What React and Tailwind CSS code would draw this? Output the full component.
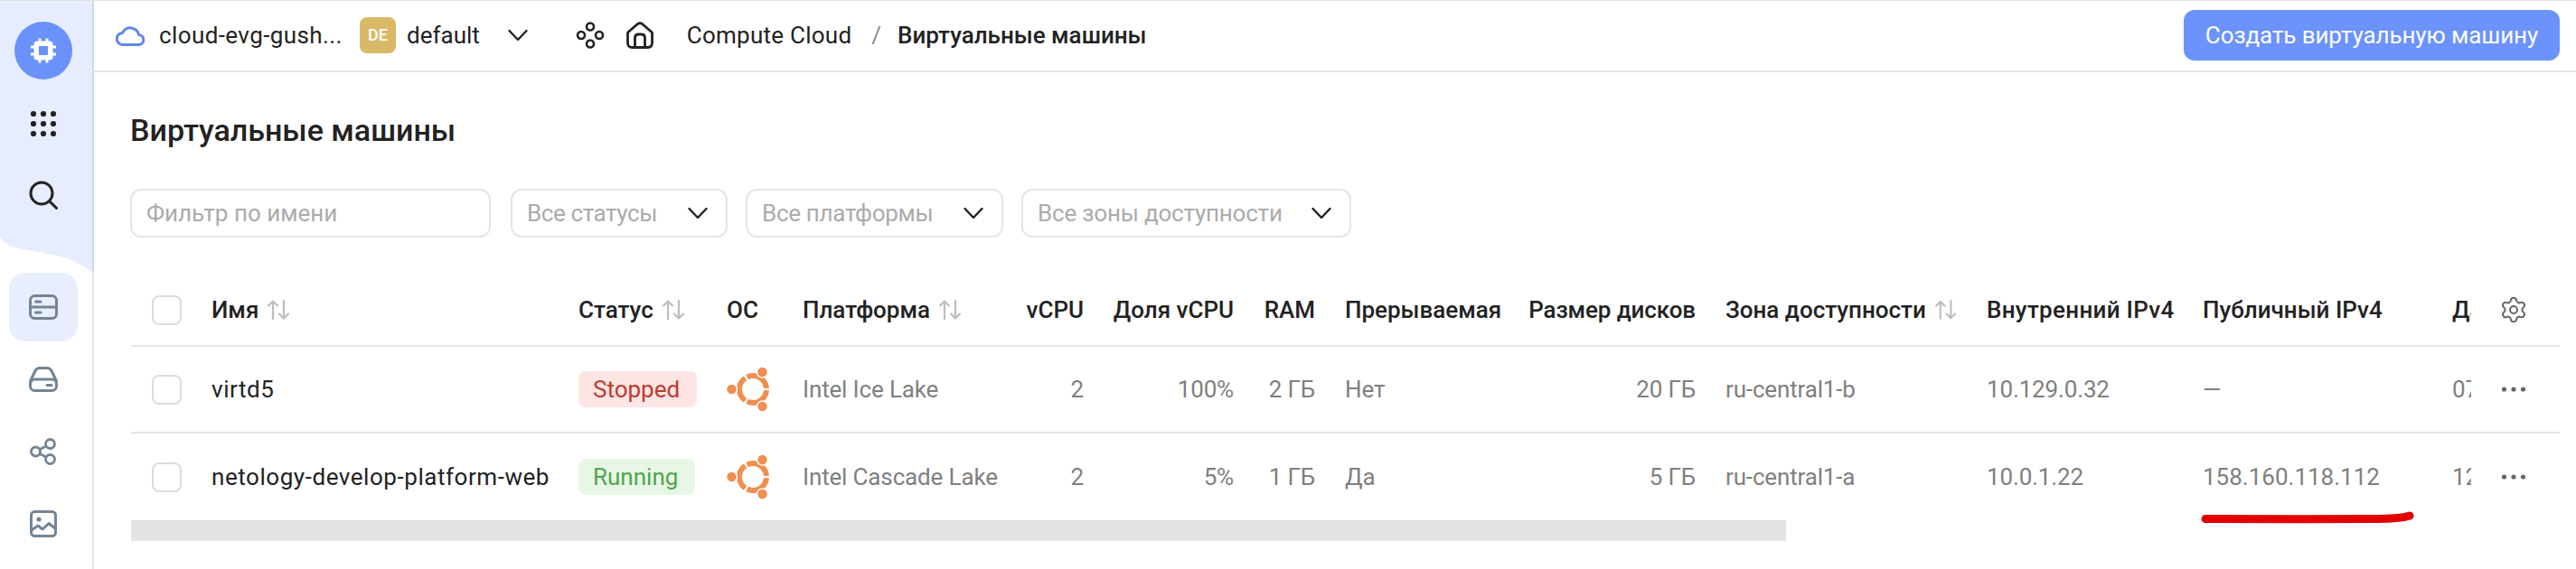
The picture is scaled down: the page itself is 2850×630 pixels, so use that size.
import React from "react";
import { Settings } from "lucide-react";

const rowGrid =
  "grid grid-cols-[33px_373px_131px_51px_213px_65px_133px_57px_172px_183px_256px_206px_243px_21px_28px] gap-x-[33px] items-center pl-[23px]";

function Chevron({ className }) {
  return (
    <svg className={className} width="22" height="14" viewBox="0 0 22 14" fill="none" stroke="#222" strokeWidth="2.4" strokeLinecap="round" strokeLinejoin="round">
      <path d="M1.5 2 L11 12 L20.5 2" />
    </svg>
  );
}

function Sort({ className }) {
  return (
    <svg className={className} width="26" height="22" viewBox="0 0 26 22" fill="none" stroke="#bdbdbd" strokeWidth="2.2" strokeLinecap="round" strokeLinejoin="round">
      <path d="M7 21 V1.5 M2 6.5 L7 1.5 L12 6.5" />
      <path d="M19 1 V20.5 M14 15.5 L19 20.5 L24 15.5" />
    </svg>
  );
}

function Ubuntu() {
  return (
    <svg width="50" height="50" viewBox="0 0 50 50" fill="none">
      <circle cx="29" cy="25" r="15" stroke="#ef8f50" strokeWidth="6" pathLength="120" strokeDasharray="37 3" strokeDashoffset="-1.5" />
      <circle cx="5.5" cy="25" r="6" fill="#ef8f50" stroke="#fff" strokeWidth="1.5" />
      <circle cx="39.5" cy="6" r="6" fill="#ef8f50" stroke="#fff" strokeWidth="1.5" />
      <circle cx="39.5" cy="44" r="6" fill="#ef8f50" stroke="#fff" strokeWidth="1.5" />
    </svg>
  );
}

function Check() {
  return <div className="w-[33px] h-[33px] rounded-[8px] border-2 border-[#dcdcdc] bg-white" />;
}

function Dots() {
  return (
    <svg width="28" height="6" viewBox="0 0 28 6" fill="#666">
      <circle cx="3.5" cy="3" r="2.6" />
      <circle cx="14" cy="3" r="2.6" />
      <circle cx="24.5" cy="3" r="2.6" />
    </svg>
  );
}

function Head({ children, sort, right, track }) {
  return (
    <div className={`flex items-center gap-[9px] font-medium text-[#222] whitespace-nowrap ${right ? "justify-end" : ""} ${track || ""}`}>
      <span>{children}</span>
      {sort && <Sort />}
    </div>
  );
}

function Row({ name, badge, badgeClass, platform, cpu, share, ram, pre, disk, zone, ip, pub, d, border }) {
  const muted = "text-[#7f7f7f] whitespace-nowrap tracking-[-0.15px]";
  return (
    <div className={`${rowGrid} h-[96px] ${border ? "border-b-2 border-[#e5e5e5]" : ""}`}>
      <Check />
      <div className="text-[#222] whitespace-nowrap tracking-[0.55px]">{name}</div>
      <div>
        <span className={`inline-flex items-center h-[40px] rounded-[8px] pl-[16px] pr-[19px] ${badgeClass}`}>{badge}</span>
      </div>
      <div className="flex"><Ubuntu /></div>
      <div className={muted}>{platform}</div>
      <div className={`${muted} text-right`}>{cpu}</div>
      <div className={`${muted} text-right`}>{share}</div>
      <div className={`${muted} text-right`}>{ram}</div>
      <div className={muted}>{pre}</div>
      <div className={`${muted} text-right`}>{disk}</div>
      <div className={muted}>{zone}</div>
      <div className={muted}>{ip}</div>
      <div className="text-[#7f7f7f] whitespace-nowrap">{pub}</div>
      <div className={`${muted} overflow-hidden`}>{d}</div>
      <div className="flex justify-center"><div className="shrink-0 flex"><Dots /></div></div>
    </div>
  );
}

export default function App() {
  return (
    <div className="flex w-[2850px] h-[630px] bg-white border-t border-[#e2e2e2] font-['Roboto',sans-serif] text-[26px] leading-[32px] text-[#222] overflow-hidden">
      {/* Sidebar */}
      <aside className="relative w-[104px] shrink-0 border-r-2 border-[#e5e5e5] pr-[6px] flex flex-col items-center">
        <svg className="absolute left-0 top-0" width="104" height="300" viewBox="0 0 104 300">
          <path d="M0 0 H102 V300 C92 293 82 287 67 283 C50 279 30 276 17 273 C9 271 4 267 0 262 Z" fill="#e7edfe" />
          <path d="M103 0 V300" stroke="#cfd8ea" strokeWidth="2" />
        </svg>
        <div className="relative w-[64px] h-[64px] mt-[23px] rounded-full bg-[#6b92fb] flex items-center justify-center">
          <svg width="28" height="28" viewBox="0 0 28 28">
            <rect x="3.5" y="3.5" width="21" height="21" rx="3.5" fill="#fff" />
            <rect x="9" y="9" width="10" height="10" fill="#6b92fb" />
            <path d="M8.5 0.5h3v4h-3zM16.5 0.5h3v4h-3zM8.5 23.5h3v4h-3zM16.5 23.5h3v4h-3zM0 8.5h4v3h-4zM0 16.5h4v3h-4zM24 8.5h4v3h-4zM24 16.5h4v3h-4z" fill="#fff" />
          </svg>
        </div>
        <svg className="relative mt-[34px]" width="30" height="30" viewBox="0 0 30 30" fill="#222">
          <circle cx="4" cy="4" r="3.1" /><circle cx="15" cy="4" r="3.1" /><circle cx="26" cy="4" r="3.1" />
          <circle cx="4" cy="15" r="3.1" /><circle cx="15" cy="15" r="3.1" /><circle cx="26" cy="15" r="3.1" />
          <circle cx="4" cy="26" r="3.1" /><circle cx="15" cy="26" r="3.1" /><circle cx="26" cy="26" r="3.1" />
        </svg>
        <svg className="relative mt-[48px]" width="32" height="32" viewBox="0 0 32 32" fill="none" stroke="#222" strokeWidth="3" strokeLinecap="round">
          <circle cx="14" cy="14" r="12" />
          <path d="M23 23 L30.5 30.5" />
        </svg>
        <div className="relative mt-[70px] w-[76px] h-[76px] rounded-[18px] bg-[#e8eefe] flex items-center justify-center">
          <svg width="32" height="28" viewBox="0 0 32 28" fill="none" stroke="#748494" strokeWidth="3" strokeLinecap="round">
            <rect x="1.5" y="1.5" width="29" height="25" rx="5" />
            <path d="M1.5 14 H30.5 M7.5 8 H13 M7.5 20 H13" />
          </svg>
        </div>
        <svg className="relative mt-[28px]" width="32" height="28" viewBox="0 0 32 28" fill="none" stroke="#748494" strokeWidth="3" strokeLinecap="round" strokeLinejoin="round">
          <path d="M1.5 16 L7 4.5 Q8.5 1.5 12 1.5 H20 Q23.5 1.5 25 4.5 L30.5 16" />
          <rect x="1.5" y="14" width="29" height="12.5" rx="5" />
          <path d="M20 20.5 H25" />
        </svg>
        <svg className="relative mt-[51px]" width="32" height="30" viewBox="0 0 32 30" fill="none" stroke="#748494" strokeWidth="2.8">
          <circle cx="7.5" cy="15" r="5" />
          <circle cx="23.5" cy="6.5" r="5" />
          <circle cx="23.5" cy="23.5" r="5" />
          <path d="M12 12.5 L19 9 M12 17.5 L19 21" />
        </svg>
        <svg className="relative mt-[50px]" width="30" height="30" viewBox="0 0 30 30" fill="none" stroke="#748494" strokeWidth="3" strokeLinecap="round" strokeLinejoin="round">
          <rect x="1.5" y="1.5" width="27" height="27" rx="4" />
          <circle cx="10" cy="10" r="2.6" fill="#748494" stroke="none" />
          <path d="M2 22 L9 17 L14 21 L21 14.5 L28 20" />
        </svg>
      </aside>

      {/* Main */}
      <div className="flex-1 min-w-0 flex flex-col">
        <header className="h-[79px] shrink-0 border-b-2 border-[#e5e5e5] flex items-center pl-[24px] pr-[18px] pb-[2px]">
          <svg width="32" height="24" viewBox="0 0 32 24" fill="none" stroke="#5f86ef" strokeWidth="3" strokeLinejoin="round">
            <path d="M8 22.5 H25 A5.5 5.5 0 0 0 25.5 11.5 A9.5 9.5 0 0 0 7.5 9.5 A6.5 6.5 0 0 0 8 22.5 Z" />
          </svg>
          <span className="ml-[16px] w-[200px] whitespace-nowrap tracking-[0.4px]">cloud-evg-gush...</span>
          <span className="ml-[22px] w-[40px] h-[40px] rounded-[8px] bg-[#d9b967] text-white text-[18px] font-medium flex items-center justify-center">DE</span>
          <span className="ml-[12px] whitespace-nowrap">default</span>
          <Chevron className="ml-[31px]" />
          <svg className="ml-[53px]" width="32" height="30" viewBox="0 0 32 30" fill="none" stroke="#222" strokeWidth="2.6">
            <circle cx="16" cy="5.5" r="4" />
            <circle cx="6" cy="15" r="4" />
            <circle cx="26" cy="15" r="4" />
            <circle cx="16" cy="24.5" r="4" />
          </svg>
          <svg className="ml-[24px]" width="30" height="30" viewBox="0 0 30 30" fill="none" stroke="#222" strokeWidth="2.8" strokeLinejoin="round">
            <path d="M1.5 12 L12.5 2.5 Q15 0.8 17.5 2.5 L28.5 12 V23.5 Q28.5 28.5 23.5 28.5 H6.5 Q1.5 28.5 1.5 23.5 Z" />
            <path d="M9.5 28.5 V18 Q9.5 14 13.5 14 H16.5 Q20.5 14 20.5 18 V28.5" />
          </svg>
          <span className="ml-[37px] whitespace-nowrap tracking-[0.25px]">Compute Cloud</span>
          <span className="ml-[22px] text-[#8c8c8c]">/</span>
          <span className="ml-[18px] whitespace-nowrap font-medium">Виртуальные машины</span>
          <button className="ml-auto h-[56px] w-[416px] rounded-[12px] bg-[#6c92fb] text-white flex items-center justify-center whitespace-nowrap tracking-[-0.1px]">Создать виртуальную машину</button>
        </header>

        <main className="relative pl-[40px] pr-[18px] flex flex-col">
          <h1 className="mt-[44px] h-[40px] text-[34px] leading-[40px] font-medium whitespace-nowrap">Виртуальные машины</h1>
          <div className="mt-[45px] flex items-center gap-[20px] text-[#ababab]">
            <div className="w-[399px] h-[54px] rounded-[12px] border-2 border-[#e5e5e5] pl-[16px] flex items-center">Фильтр по имени</div>
            <div className="ml-[2px] w-[240px] h-[54px] rounded-[12px] border-2 border-[#e5e5e5] pl-[16px] pr-[20px] flex items-center justify-between tracking-[-0.4px]">Все статусы<Chevron /></div>
            <div className="w-[285px] h-[54px] rounded-[12px] border-2 border-[#e5e5e5] pl-[16px] pr-[20px] flex items-center justify-between tracking-[-0.3px]">Все платформы<Chevron /></div>
            <div className="w-[365px] h-[54px] rounded-[12px] border-2 border-[#e5e5e5] pl-[16px] pr-[20px] flex items-center justify-between tracking-[-0.2px]">Все зоны доступности<Chevron /></div>
          </div>

          <div className="mt-[41px] ml-[1px]">
            <div className={`${rowGrid} h-[80px] border-b-2 border-[#e5e5e5]`}>
              <Check />
              <Head sort>Имя</Head>
              <Head sort>Статус</Head>
              <Head>ОС</Head>
              <Head sort>Платформа</Head>
              <Head right>vCPU</Head>
              <Head right>Доля vCPU</Head>
              <Head right>RAM</Head>
              <Head>Прерываемая</Head>
              <Head right track="-tracking-[0.1px]">Размер дисков</Head>
              <Head sort>Зона доступности</Head>
              <Head track="tracking-[0.3px]">Внутренний IPv4</Head>
              <Head>Публичный IPv4</Head>
              <div className="overflow-hidden font-medium">Дата</div>
              <div className="flex justify-center"><Settings className="shrink-0" size={32} color="#666" strokeWidth={1.5} /></div>
            </div>
            <Row border name="virtd5" badge="Stopped" badgeClass="bg-[#fde5e3] text-[#c0392f]" platform="Intel Ice Lake" cpu="2" share="100%" ram="2 ГБ" pre="Нет" disk="20 ГБ" zone="ru-central1-b" ip="10.129.0.32" pub="—" d="07.03" />
            <Row name="netology-develop-platform-web" badge="Running" badgeClass="bg-[#e8f6e6] text-[#4ea64a]" platform="Intel Cascade Lake" cpu="2" share="5%" ram="1 ГБ" pre="Да" disk="5 ГБ" zone="ru-central1-a" ip="10.0.1.22" pub="158.160.118.112" d="12.03" />
            <div className="w-[1831px] h-[23px] bg-[#e3e3e3]" />
          </div>

          <svg className="absolute left-[2331px] top-[486px]" width="236" height="14" viewBox="0 0 236 14" fill="none">
            <path d="M5 8.5 C60 9 130 9 190 8.5 C205 8.5 222 8 231 5" stroke="#e30000" strokeWidth="9" strokeLinecap="round" />
          </svg>
        </main>
      </div>
    </div>
  );
}
